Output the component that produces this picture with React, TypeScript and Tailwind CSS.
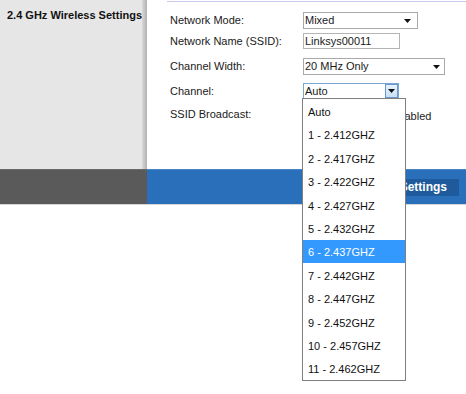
import React from "react";

const Arrow = () => (
  <svg width="7" height="4" viewBox="0 0 7 4" className="block">
    <path d="M0 0 H7 L3.5 4 Z" fill="#111" />
  </svg>
);

const items = [
  "Auto",
  "1 - 2.412GHZ",
  "2 - 2.417GHZ",
  "3 - 2.422GHZ",
  "4 - 2.427GHZ",
  "5 - 2.432GHZ",
  "6 - 2.437GHZ",
  "7 - 2.442GHZ",
  "8 - 2.447GHZ",
  "9 - 2.452GHZ",
  "10 - 2.457GHZ",
  "11 - 2.462GHZ",
];
const tall = [true, false, true, false, true, false, false, true, false, true, false, false];

export default function App() {
  return (
    <div
      className="relative w-[466px] h-[394px] overflow-hidden bg-white text-[11px] text-[#1a1a1a]"
      style={{ fontFamily: '"Liberation Sans", Arial, sans-serif' }}
    >
      <div className="flex h-[169px]">
        <div className="w-[142px] bg-[#e6e6e6] pl-[7px] pt-[9px]">
          <div className="font-bold text-[11px] text-[#111] leading-[13px]">2.4 GHz Wireless Settings</div>
        </div>
        <div className="w-[5px] bg-gradient-to-r from-[#d8d8d8] to-[#b2b2b2]" />
        <div className="flex-1 flex flex-col">
          <div className="ml-[20px] mt-[1px] h-px bg-[#cacaf0]" />
          <div className="flex items-center h-[17px] mt-[10px] pl-[23px]">
            <div className="w-[133px]">Network Mode:</div>
            <div className="flex items-center justify-between w-[115px] h-[17px] border border-[#a9a9a9] pl-[1px] pr-[6px]">
              <span>Mixed</span>
              <Arrow />
            </div>
          </div>
          <div className="flex items-center h-[16px] mt-[4px] pl-[23px]">
            <div className="w-[133px]">Network Name (SSID):</div>
            <div className="flex items-center w-[97px] h-[16px] border border-[#b5b5b5] pl-[1px]">
              <span>Linksys00011</span>
            </div>
          </div>
          <div className="flex items-center h-[17px] mt-[9px] pl-[23px]">
            <div className="w-[133px]">Channel Width:</div>
            <div className="flex items-center justify-between w-[142px] h-[17px] border border-[#a9a9a9] pl-[1px] pr-[4px]">
              <span>20 MHz Only</span>
              <Arrow />
            </div>
          </div>
          <div className="flex items-center h-[16px] mt-[8px] pl-[23px]">
            <div className="w-[133px]">Channel:</div>
            <div className="flex items-center justify-between w-[96px] h-[16px] border border-[#7aa7d6] pl-[1px]">
              <span>Auto</span>
              <div className="flex items-center justify-center w-[13px] h-[14px] border border-[#6d98c8] bg-gradient-to-b from-[#e8f3fc] to-[#c6e0f6]">
                <Arrow />
              </div>
            </div>
          </div>
          <div className="flex items-center h-[17px] mt-[7px] pl-[23px]">
            <div className="w-[133px]">SSID Broadcast:</div>
            <div className="flex items-center ml-[88px] pt-[3px]">
              <span className="text-[11px]">Enabled</span>
            </div>
          </div>
        </div>
      </div>
      <div className="flex h-[36px] border-b border-[#d6d6d6]">
        <div className="w-[147px] bg-[#5a5a5a] border-t border-[#6a6a6a]" />
        <div className="flex-1 flex items-center justify-end bg-[#2a6fb9] border-t border-[#4a87c9] pr-[7px]">
          <div className="h-[17px] flex items-center bg-[#1f5b9c] px-[12px] text-white font-bold text-[12px]">
            Save Settings
          </div>
        </div>
      </div>

      <div className="absolute left-[302px] top-[98px] w-[104px] border border-[#7f7f7f] bg-white">
        {items.map((t, i) => (
          <div
            key={t}
            className={
              (tall[i] ? "h-[24px] " : "h-[23px] ") +
              (i === 6 ? "bg-[#3399ff] text-white " : "text-[#111] ") +
              "flex items-center pl-[5px] pt-[2px]"
            }
          >
            {t}
          </div>
        ))}
      </div>
    </div>
  );
}
